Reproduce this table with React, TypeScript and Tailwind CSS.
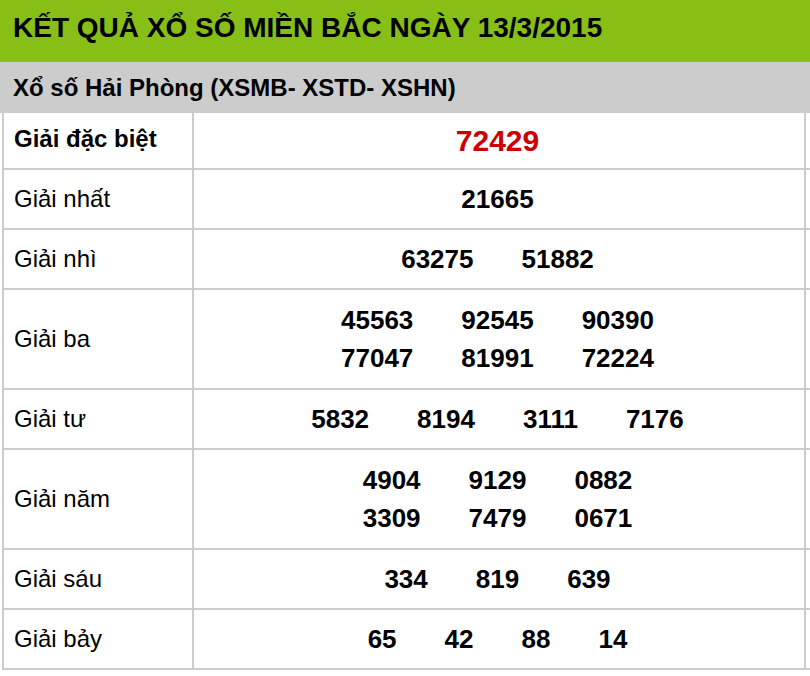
const rows: { label: string; lines: string[][]; special?: boolean }[] = [
  { label: 'Giải đặc biệt', lines: [['72429']], special: true },
  { label: 'Giải nhất', lines: [['21665']] },
  { label: 'Giải nhì', lines: [['63275', '51882']] },
  { label: 'Giải ba', lines: [['45563', '92545', '90390'], ['77047', '81991', '72224']] },
  { label: 'Giải tư', lines: [['5832', '8194', '3111', '7176']] },
  { label: 'Giải năm', lines: [['4904', '9129', '0882'], ['3309', '7479', '0671']] },
  { label: 'Giải sáu', lines: [['334', '819', '639']] },
  { label: 'Giải bảy', lines: [['65', '42', '88', '14']] },
]

export default function App() {
  return (
    <div className="w-[810px] h-[676px] bg-white text-black font-['Liberation_Sans',Arial,sans-serif] overflow-hidden">
      <div className="h-[62px] bg-[#87bf16] flex items-center px-[13px] pb-[6px]">
        <h1 className="text-[28px] font-bold leading-none">KẾT QUẢ XỔ SỐ MIỀN BẮC NGÀY 13/3/2015</h1>
      </div>
      <div className="h-[51px] bg-[#cccccc] flex items-center px-[13px]">
        <h2 className="text-[24px] font-bold leading-none">Xổ số Hải Phòng (XSMB- XSTD- XSHN)</h2>
      </div>

      <div className="pl-[2px]">
        {rows.map((row) => {
          const h = row.special ? 'h-[57px]' : row.lines.length > 1 ? 'h-[100px]' : 'h-[60px]'
          return (
            <div key={row.label} className={`flex border-b-2 border-[#cccccc] ${h}`}>
              <div
                className={`w-[192px] border-l-2 border-r-2 border-[#cccccc] pl-[10px] flex items-center text-[24px] ${
                  row.special ? 'font-bold pb-[4px]' : ''
                }`}
              >
                {row.label}
              </div>
              <div className="w-[612px] border-r-2 border-[#cccccc] flex flex-col items-center justify-center pr-[3px]">
                {row.lines.map((line, i) => (
                  <div key={i} className="flex leading-[38px]">
                    {line.map((n) => (
                      <span
                        key={n}
                        className={
                          row.special
                            ? 'px-6 text-[30px] font-bold text-[#cc0000]'
                            : 'px-6 text-[26px] font-bold'
                        }
                      >
                        {n}
                      </span>
                    ))}
                  </div>
                ))}
              </div>
            </div>
          )
        })}
      </div>
    </div>
  )
}
